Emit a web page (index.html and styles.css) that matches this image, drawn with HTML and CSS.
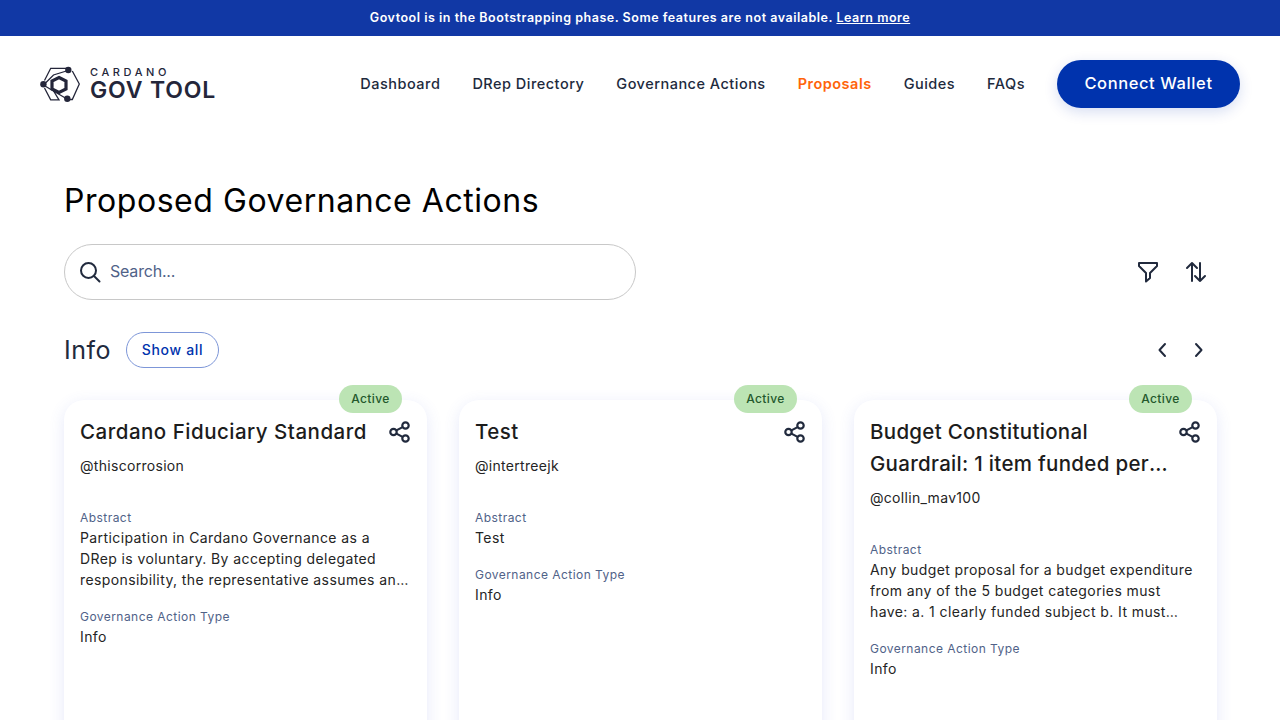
FILE: index.html
```html
<!DOCTYPE html>
<html lang="en">
<head>
  <meta charset="UTF-8" />
  <title>GovTool - Proposals</title>
  <link rel="stylesheet" href="styles.css">
</head>
<body>

  <div class="banner">Govtool is in the Bootstrapping phase. Some features are not available. <a href="#">Learn more</a></div>

  <header class="header">
    <a class="logo" href="#">
      <svg width="40" height="36" viewBox="0 0 40 36" fill="none" stroke="#24263a" stroke-width="1.3">
        <path d="M4.5 14.5L10.7 2.3H28"/>
        <path d="M32.3 5L39.3 18L32.3 33.5H27"/>
        <path d="M4.5 22L10.7 33.8H19L13 24"/>
        <path d="M28 4.5L13.5 9L5 17.5"/>
        <path d="M5 20L27 33"/>
        <path d="M19 11.5L26 15V23L19 26.5L12 23V15Z" stroke-width="3.2"/>
        <circle cx="28.3" cy="4" r="3.2" fill="#24263a" stroke="none"/>
        <circle cx="3.4" cy="18.3" r="3.2" fill="#24263a" stroke="none"/>
        <circle cx="27.3" cy="32.7" r="3.2" fill="#24263a" stroke="none"/>
      </svg>
      <span class="logo-text">
        <span class="logo-top">CARDANO</span>
        <span class="logo-main">GOV TOOL</span>
      </span>
    </a>
    <nav class="nav">
      <a href="#">Dashboard</a>
      <a href="#">DRep Directory</a>
      <a href="#">Governance Actions</a>
      <a href="#" class="active">Proposals</a>
      <a href="#">Guides</a>
      <a href="#">FAQs</a>
      <button class="connect">Connect Wallet</button>
    </nav>
  </header>

  <main class="main">
    <h1>Proposed Governance Actions</h1>

    <div class="toolbar">
      <div class="search">
        <svg width="24" height="24" viewBox="0 0 24 24" fill="none" stroke="#212a3d" stroke-width="2" stroke-linecap="round">
          <circle cx="10.5" cy="10.5" r="7.5"/>
          <path d="M16 16L21.5 21.5"/>
        </svg>
        <span>Search...</span>
      </div>
      <div class="tools">
        <svg width="24" height="24" viewBox="0 0 24 24" fill="none" stroke="#212a3d" stroke-width="2" stroke-linecap="round" stroke-linejoin="round">
          <path d="M3 3H21V6L14 13V18L10 21.5V13L3 6Z"/>
        </svg>
        <svg width="24" height="24" viewBox="0 0 24 24" fill="none" stroke="#212a3d" stroke-width="2" stroke-linecap="round" stroke-linejoin="round">
          <path d="M8 21V3M3 8L8 3L13 8"/>
          <path d="M16 3V21M11 16L16 21L21 16"/>
        </svg>
      </div>
    </div>

    <div class="section-head">
      <h2>Info</h2>
      <a class="show-all" href="#">Show all</a>
      <div class="arrows">
        <svg width="24" height="24" viewBox="0 0 24 24" fill="none" stroke="#212a3d" stroke-width="2" stroke-linecap="round" stroke-linejoin="round"><path d="M15 6L9.5 12L15 18"/></svg>
        <svg width="24" height="24" viewBox="0 0 24 24" fill="none" stroke="#212a3d" stroke-width="2" stroke-linecap="round" stroke-linejoin="round"><path d="M9 6L14.5 12L9 18"/></svg>
      </div>
    </div>

    <div class="cards">
      <div class="card">
        <span class="badge">Active</span>
        <div class="card-head">
          <h3>Cardano Fiduciary Standard</h3>
          <svg class="share" width="24" height="24" viewBox="0 0 24 24" fill="none" stroke="#212a3d" stroke-width="2.2"><circle cx="17.5" cy="5.5" r="3.2"/><circle cx="5.5" cy="12" r="3.2"/><circle cx="17.5" cy="18.5" r="3.2"/><path d="M8.4 10.4L14.6 7.1M8.4 13.6L14.6 16.9"/></svg>
        </div>
        <p class="author">@thiscorrosion</p>
        <div class="label">Abstract</div>
        <p class="text clamp">Participation in Cardano Governance as a DRep is voluntary. By accepting delegated responsibility, the representative assumes an obligation to act in good faith for those who delegate.</p>
        <div class="label">Governance Action Type</div>
        <p class="text">Info</p>
      </div>

      <div class="card">
        <span class="badge">Active</span>
        <div class="card-head">
          <h3>Test</h3>
          <svg class="share" width="24" height="24" viewBox="0 0 24 24" fill="none" stroke="#212a3d" stroke-width="2.2"><circle cx="17.5" cy="5.5" r="3.2"/><circle cx="5.5" cy="12" r="3.2"/><circle cx="17.5" cy="18.5" r="3.2"/><path d="M8.4 10.4L14.6 7.1M8.4 13.6L14.6 16.9"/></svg>
        </div>
        <p class="author">@intertreejk</p>
        <div class="label">Abstract</div>
        <p class="text clamp">Test</p>
        <div class="label">Governance Action Type</div>
        <p class="text">Info</p>
      </div>

      <div class="card">
        <span class="badge">Active</span>
        <div class="card-head">
          <h3 class="clamp-title">Budget Constitutional Guardrail: 1 item funded per budget proposal and more</h3>
          <svg class="share" width="24" height="24" viewBox="0 0 24 24" fill="none" stroke="#212a3d" stroke-width="2.2"><circle cx="17.5" cy="5.5" r="3.2"/><circle cx="5.5" cy="12" r="3.2"/><circle cx="17.5" cy="18.5" r="3.2"/><path d="M8.4 10.4L14.6 7.1M8.4 13.6L14.6 16.9"/></svg>
        </div>
        <p class="author">@collin_mav100</p>
        <div class="label">Abstract</div>
        <p class="text clamp">Any budget proposal for a budget expenditure from any of the 5 budget categories must have: a. 1 clearly funded subject b. It must state the amount and the period it covers.</p>
        <div class="label">Governance Action Type</div>
        <p class="text">Info</p>
      </div>
    </div>
  </main>

</body>
</html>
```

FILE: styles.css
```css
* {
  box-sizing: border-box;
}
html, body {
  height: 720px;
  overflow: hidden;
}
body {
  margin: 0;
  font-family: Inter, "Noto Sans", sans-serif;
  color: #212a3d;
  background: white;
}
a {
  color: inherit;
  text-decoration: none;
}
h1, h2, h3, p {
  margin: 0;
  font-weight: normal;
}
.banner {
  height: 36px;
  line-height: 36px;
  background: #1138a5;
  color: white;
  font-size: 12.5px;
  font-weight: 600;
  letter-spacing: 0.52px;
  text-align: center;
}
.banner a {
  text-decoration: underline;
}
.header {
  height: 96px;
  padding: 0 40px;
  display: flex;
  justify-content: space-between;
  align-items: center;
}
.logo {
  display: flex;
  align-items: center;
  gap: 10px;
  color: #24263a;
}
.logo-text {
  display: flex;
  flex-direction: column;
}
.logo-top {
  font-size: 11px;
  line-height: 12px;
  letter-spacing: 3.6px;
  font-weight: 500;
}
.logo-main {
  font-size: 23px;
  line-height: 25px;
  font-weight: 600;
  letter-spacing: 0.85px;
}
.nav {
  display: flex;
  align-items: center;
  gap: 32px;
  font-size: 14.5px;
  font-weight: 500;
  letter-spacing: 0.49px;
}
.nav a {
  margin-bottom: 2px;
}
.nav .active {
  color: #ff640a;
  font-weight: 600;
}
.connect {
  width: 183px;
  height: 48px;
  padding-bottom: 4px;
  border: none;
  border-radius: 24px;
  background: #0033ad;
  color: white;
  font-family: inherit;
  font-size: 16.5px;
  font-weight: 500;
  letter-spacing: 0.6px;
  box-shadow: 0 4px 14px rgba(0, 51, 173, 0.16);
}
.main {
  padding: 45px 63px 0 64px;
}
h1 {
  font-size: 32px;
  line-height: 48px;
  letter-spacing: 0.55px;
  color: black;
}
.toolbar {
  margin-top: 19px;
  display: flex;
  justify-content: space-between;
  align-items: center;
}
.search {
  width: 572px;
  height: 56px;
  padding: 0 13px;
  display: flex;
  align-items: center;
  gap: 8px;
  border: 1px solid #c8c8c8;
  border-radius: 28px;
  color: #506288;
  font-size: 16px;
  letter-spacing: -0.2px;
}
.search span {
  margin-bottom: 2px;
}
.tools {
  display: flex;
  gap: 24px;
  padding-right: 9px;
}
.section-head {
  margin-top: 32px;
  height: 36px;
  display: flex;
  align-items: center;
  gap: 15px;
}
h2 {
  font-size: 25px;
  line-height: 36px;
  letter-spacing: 0.5px;
}
.show-all {
  width: 93px;
  height: 36px;
  line-height: 34px;
  text-align: center;
  border: 1px solid #7d96d8;
  border-radius: 18px;
  color: #0033ad;
  font-size: 14px;
  font-weight: 500;
  letter-spacing: 0.7px;
}
.arrows {
  margin-left: auto;
  display: flex;
  gap: 13px;
  padding-right: 6px;
}
.cards {
  margin-top: 32px;
  display: grid;
  grid-template-columns: repeat(3, 363px);
  gap: 32px;
}
.card {
  position: relative;
  height: 400px;
  padding: 16px;
  border-radius: 20px;
  background: white;
  box-shadow: 0 4px 16px rgba(80, 100, 220, 0.14);
}
.badge {
  position: absolute;
  top: -15px;
  right: 25px;
  width: 63px;
  height: 28px;
  line-height: 28px;
  text-align: center;
  border-radius: 14px;
  background: #bce4b4;
  color: #23582c;
  font-size: 12px;
  font-weight: 500;
  letter-spacing: 0.4px;
}
.card-head {
  display: flex;
  justify-content: space-between;
}
.share {
  flex: none;
  margin: 4px -1px 0 0;
}
h3 {
  font-size: 20.5px;
  line-height: 32px;
  font-weight: 500;
  letter-spacing: 0.5px;
  color: #1c1c1c;
  white-space: nowrap;
}
h3.clamp-title {
  white-space: normal;
  letter-spacing: 0.3px;
  display: -webkit-box;
  -webkit-box-orient: vertical;
  -webkit-line-clamp: 2;
  overflow: hidden;
}
.author {
  margin-top: 8px;
  font-size: 14px;
  line-height: 20px;
  letter-spacing: 0.3px;
  color: #242424;
}
.label {
  margin-top: 33px;
  font-size: 12px;
  line-height: 18px;
  letter-spacing: 0.45px;
  color: #506288;
}
.text {
  font-size: 14px;
  line-height: 21px;
  letter-spacing: 0.4px;
  color: #242424;
}
.clamp {
  display: -webkit-box;
  -webkit-box-orient: vertical;
  -webkit-line-clamp: 3;
  overflow: hidden;
}
.clamp + .label {
  margin-top: 18px;
}
```
